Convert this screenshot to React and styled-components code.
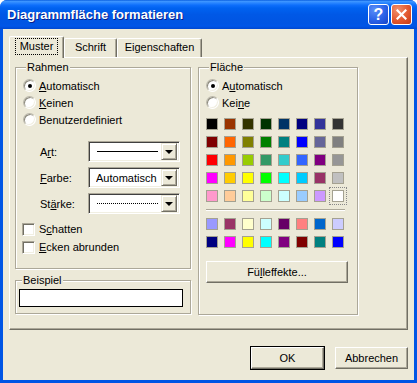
import styled, { createGlobalStyle } from "styled-components";

const GlobalStyle = createGlobalStyle`
  html, body { margin: 0; padding: 0; background: #fff; }
  body {
    font-family: "Liberation Sans", Arial, sans-serif;
    font-size: 11px;
    color: #000;
  }
`;

const palette = [
  ["#000000", "#993300", "#333300", "#003300", "#003366", "#000080", "#333399", "#333333"],
  ["#800000", "#FF6600", "#808000", "#008000", "#008080", "#0000FF", "#666699", "#808080"],
  ["#FF0000", "#FF9900", "#99CC00", "#339966", "#33CCCC", "#3366FF", "#800080", "#969696"],
  ["#FF00FF", "#FFCC00", "#FFFF00", "#00FF00", "#00FFFF", "#00CCFF", "#993366", "#C0C0C0"],
  ["#FF99CC", "#FFCC99", "#FFFF99", "#CCFFCC", "#CCFFFF", "#99CCFF", "#CC99FF", "#FFFFFF"],
];

const extra = [
  ["#9999FF", "#993366", "#FFFFCC", "#CCFFFF", "#660066", "#FF8080", "#0066CC", "#CCCCFF"],
  ["#000080", "#FF00FF", "#FFFF00", "#00FFFF", "#800080", "#800000", "#008080", "#0000FF"],
];

const Window = styled.div`
  width: 417px;
  height: 383px;
  display: flex;
  flex-direction: column;
  background: #0055e5;
  border-radius: 7px 7px 0 0;
  overflow: hidden;
`;

const TitleBar = styled.div`
  height: 29px;
  flex: none;
  display: flex;
  align-items: center;
  gap: 2px;
  padding: 0 5px 0 7px;
  background: linear-gradient(
    to bottom,
    #0a5fe0 0%,
    #3d95ff 5%,
    #2a86ff 10%,
    #0d6efb 18%,
    #0062f0 28%,
    #0058e6 50%,
    #0055e3 80%,
    #0056e8 90%,
    #0048d0 100%
  );
`;

const Title = styled.div`
  flex: 1;
  color: #fff;
  font-weight: bold;
  font-size: 13px;
  text-shadow: 1px 1px 0 #0a1f8a;
  padding-bottom: 1px;
`;

const CaptionButton = styled.div`
  width: 21px;
  height: 21px;
  box-sizing: border-box;
  border: 1px solid #fff;
  border-radius: 3px;
  display: flex;
  align-items: center;
  justify-content: center;
  color: #fff;
  font-weight: bold;
  font-size: 16px;
  background: ${(p) =>
    p.$close
      ? "radial-gradient(circle at 30% 25%, #f2906c 0%, #e2582f 55%, #c43a16 100%)"
      : "radial-gradient(circle at 30% 25%, #5b8ff8 0%, #2a62e8 55%, #1743c7 100%)"};
`;

const Body = styled.div`
  flex: 1;
  margin: 0 3px 3px;
  background: #ece9d8;
  padding: 7px 6px 0;
  display: flex;
  flex-direction: column;
`;

const TabStrip = styled.div`
  height: 21px;
  display: flex;
  align-items: flex-start;
`;

const Tab = styled.div`
  position: relative;
  width: ${(p) => p.$w}px;
  height: ${(p) => (p.$active ? 22 : 19)}px;
  margin-top: ${(p) => (p.$active ? 0 : 2)}px;
  z-index: ${(p) => (p.$active ? 1 : 0)};
  box-sizing: border-box;
  background: #ece9d8;
  border: 1px solid #fff;
  border-right-color: #716f64;
  border-bottom: none;
  border-radius: 2px 2px 0 0;
  box-shadow: inset -1px 0 0 #aca899;
  display: flex;
  justify-content: center;
  padding-top: ${(p) => (p.$active ? 2 : 1)}px;
  line-height: 13px;
`;

const TabLabel = styled.span`
  padding: 1px 4px;
  height: 13px;
  outline: ${(p) => (p.$focus ? "1px dotted #000" : "none")};
  outline-offset: 0;
`;

const Panel = styled.div`
  height: 273px;
  box-sizing: border-box;
  border: 1px solid #fff;
  border-right-color: #716f64;
  border-bottom-color: #716f64;
  box-shadow: inset -1px -1px 0 #aca899;
  padding: 3px 5px 0;
  display: flex;
  gap: 7px;
`;

const Column = styled.div`
  width: 176px;
  display: flex;
  flex-direction: column;
  gap: 5px;
`;

const Group = styled.fieldset`
  margin: 0;
  min-width: 0;
  box-sizing: border-box;
  width: ${(p) => p.$w}px;
  height: ${(p) => p.$h}px;
  border: 1px solid #aca899;
  border-radius: 0;
  box-shadow: inset 1px 1px 0 #fff, 1px 1px 0 #fff;
  padding: ${(p) => p.$pad || "3px 0 0 7px"};
  display: flex;
  flex-direction: column;
  align-items: flex-start;
`;

const Legend = styled.legend`
  padding: 0 1px;
  margin-left: 3px;
  line-height: 13px;
  background: #ece9d8;
`;

const Key = styled.span`
  text-decoration: underline;
  text-underline-offset: 1px;
`;

const OptionRow = styled.label`
  height: ${(p) => p.$h || 17}px;
  display: flex;
  align-items: center;
  gap: ${(p) => p.$gap || 3}px;
  white-space: nowrap;
`;

const Sunken = `
  box-sizing: border-box;
  background: #fff;
  border: 1px solid;
  border-color: #aca899 #fff #fff #aca899;
  box-shadow: inset 1px 1px 0 #716f64, inset -1px -1px 0 #f1efe2;
`;

const Radio = styled.span`
  ${Sunken}
  width: 13px;
  height: 13px;
  border-radius: 50%;
  border-color: #b9b6a8 #fff #fff #b9b6a8;
  box-shadow: inset 1px 1px 0 #8d8a7d, inset -1px -1px 0 #f1efe2;
  display: flex;
  align-items: center;
  justify-content: center;

  &::after {
    content: "";
    width: 4px;
    height: 4px;
    border-radius: 50%;
    background: ${(p) => (p.$checked ? "#000" : "transparent")};
  }
`;

const Check = styled.span`
  ${Sunken}
  width: 13px;
  height: 13px;
`;

const FieldGrid = styled.div`
  margin: 13px 0 0 17px;
  display: grid;
  grid-template-columns: 48px 92px;
  grid-auto-rows: 21px;
  row-gap: 5px;
  align-items: center;
`;

const Combo = styled.div`
  ${Sunken}
  height: 21px;
  display: flex;
  align-items: center;
  padding: 2px 2px 2px 7px;
  border-color: #aca899 #fff #fff #aca899;
  box-shadow: inset 1px 1px 0 #404040, inset -1px -1px 0 #f1efe2;
`;

const ComboValue = styled.div`
  flex: 1;
  min-width: 0;
  display: flex;
  align-items: center;
  white-space: nowrap;
  overflow: hidden;
`;

const Line = styled.div`
  width: 61px;
  margin-left: 1px;
  border-top: 1px ${(p) => (p.$dotted ? "dotted" : "solid")} #000;
`;

const DropButton = styled.div`
  flex: none;
  width: 16px;
  height: 17px;
  box-sizing: border-box;
  background: #ece9d8;
  border: 1px solid;
  border-color: #ece9d8 #716f64 #716f64 #ece9d8;
  box-shadow: inset 1px 1px 0 #fff, inset -1px -1px 0 #aca899;
  display: flex;
  align-items: center;
  justify-content: center;

  &::after {
    content: "";
    border-left: 4px solid transparent;
    border-right: 4px solid transparent;
    border-top: 4px solid #000;
    margin-top: 1px;
  }
`;

const Checks = styled.div`
  margin: 6px 0 0 -1px;
  display: flex;
  flex-direction: column;
`;

const Preview = styled.div`
  width: 164px;
  height: 18px;
  box-sizing: border-box;
  background: #fff;
  border: 1px solid #000;
  margin-top: 2px;
`;

const Swatches = styled.div`
  display: grid;
  grid-template-columns: repeat(8, 12px);
  grid-auto-rows: 12px;
  gap: 6px;
  margin-top: ${(p) => p.$mt}px;
`;

const Swatch = styled.div`
  box-sizing: border-box;
  border: 1px solid #a4a191;
  background: ${(p) => p.$c};
  outline: ${(p) => (p.$selected ? "1px dotted #888" : "none")};
  outline-offset: 2px;
`;

const Separator = styled.div`
  width: 139px;
  height: 1px;
  background: #aca899;
  box-shadow: 0 1px 0 #fff;
  margin-top: 7px;
`;

const Button = styled.button`
  width: ${(p) => p.$w}px;
  height: 22px;
  margin-top: ${(p) => p.$mt || 0}px;
  box-sizing: border-box;
  font: inherit;
  color: #000;
  background: #ece9d8;
  border: 1px solid;
  border-color: #fff #716f64 #716f64 #fff;
  box-shadow: inset -1px -1px 0 #aca899;
  padding: 0;
  outline: ${(p) => (p.$default ? "1px solid #000" : "none")};
  outline-offset: 0;
`;

const ButtonRow = styled.div`
  margin-top: 17px;
  display: flex;
  justify-content: flex-end;
  gap: 11px;
`;

const CloseGlyph = () => (
  <svg width="11" height="11" viewBox="0 0 11 11">
    <path d="M1.5 1.5 L9.5 9.5 M9.5 1.5 L1.5 9.5" stroke="#fff" strokeWidth="2.2" strokeLinecap="square" />
  </svg>
);

const Option = ({ type = "radio", checked, children, ...rest }) => (
  <OptionRow {...rest}>
    {type === "radio" ? <Radio $checked={checked} /> : <Check />}
    <span>{children}</span>
  </OptionRow>
);

export default function App() {
  return (
    <>
      <GlobalStyle />
      <Window>
        <TitleBar>
          <Title>Diagrammfläche formatieren</Title>
          <CaptionButton>?</CaptionButton>
          <CaptionButton $close>
            <CloseGlyph />
          </CaptionButton>
        </TitleBar>
        <Body>
          <TabStrip>
            <Tab $active $w={55}>
              <TabLabel $focus>Muster</TabLabel>
            </Tab>
            <Tab $w={53}>
              <TabLabel>Schrift</TabLabel>
            </Tab>
            <Tab $w={85}>
              <TabLabel>Eigenschaften</TabLabel>
            </Tab>
          </TabStrip>
          <Panel>
            <Column>
              <Group $w={176} $h={208}>
                <Legend>Rahmen</Legend>
                <Option checked>
                  <Key>A</Key>utomatisch
                </Option>
                <Option>
                  <Key>K</Key>einen
                </Option>
                <Option>Benutzerdefiniert</Option>
                <FieldGrid>
                  <span>
                    A<Key>r</Key>t:
                  </span>
                  <Combo>
                    <ComboValue>
                      <Line />
                    </ComboValue>
                    <DropButton />
                  </Combo>
                  <span>
                    <Key>F</Key>arbe:
                  </span>
                  <Combo>
                    <ComboValue>Automatisch</ComboValue>
                    <DropButton />
                  </Combo>
                  <span>
                    St<Key>ä</Key>rke:
                  </span>
                  <Combo>
                    <ComboValue>
                      <Line $dotted />
                    </ComboValue>
                    <DropButton />
                  </Combo>
                </FieldGrid>
                <Checks>
                  <Option type="check" $h={18} $gap={4}>
                    S<Key>c</Key>hatten
                  </Option>
                  <Option type="check" $h={18} $gap={4}>
                    <Key>E</Key>cken abrunden
                  </Option>
                </Checks>
              </Group>
              <Group $w={176} $h={40} $pad="0 0 0 3px">
                <Legend>Beispiel</Legend>
                <Preview />
              </Group>
            </Column>
            <Group $w={160} $h={254}>
              <Legend>Fläche</Legend>
              <Option checked>
                A<Key>u</Key>tomatisch
              </Option>
              <Option>
                Kei<Key>n</Key>e
              </Option>
              <Swatches $mt={7}>
                {palette.flat().map((c, i) => (
                  <Swatch key={i} $c={c} $selected={i === 39} />
                ))}
              </Swatches>
              <Separator />
              <Swatches $mt={8}>
                {extra.flat().map((c, i) => (
                  <Swatch key={i} $c={c} />
                ))}
              </Swatches>
              <Button $w={142} $mt={13}>
                Fü<Key>l</Key>leffekte...
              </Button>
            </Group>
          </Panel>
          <ButtonRow>
            <Button $w={73} $default>
              OK
            </Button>
            <Button $w={73}>Abbrechen</Button>
          </ButtonRow>
        </Body>
      </Window>
    </>
  );
}
